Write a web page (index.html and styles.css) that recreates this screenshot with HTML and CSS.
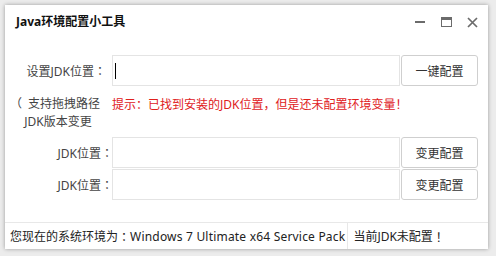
FILE: index.html
```html
<!DOCTYPE html>
<html lang="zh-CN">
<head>
<meta charset="utf-8">
<title>Java环境配置小工具</title>
<link rel="stylesheet" href="styles.css">
</head>
<body>
<div class="window">
  <div class="titlebar">
    <div class="title">Java环境配置小工具</div>
    <div class="controls">
      <svg class="ctl" width="11" height="11" viewBox="0 0 11 11"><rect x="0" y="4" width="10" height="2" fill="#6b6b6b"/></svg>
      <svg class="ctl" width="11" height="11" viewBox="0 0 11 11"><rect x="0.5" y="0.5" width="10" height="9" fill="none" stroke="#6b6b6b"/><rect x="0" y="0" width="11" height="3" fill="#6b6b6b"/></svg>
      <svg class="ctl" width="11" height="11" viewBox="0 0 11 11"><path d="M1 1 L10 10 M10 1 L1 10" stroke="#6b6b6b" stroke-width="1.7"/></svg>
    </div>
  </div>
  <div class="form">
    <div class="label label-first">设置JDK位置<span class="p">：</span></div>
    <div class="field"><span class="caret"></span></div>
    <button class="btn">一键配置</button>

    <div class="label label-note"><span class="p paren">（</span>支持拖拽路径<br>JDK版本变更</div>
    <div class="hint">提示<span class="p">：</span>已找到安装的JDK位置<span class="p">，</span>但是还未配置环境变量<span class="p">！</span></div>
    <div></div>

    <div class="label">JDK位置<span class="p">：</span></div>
    <div class="field"></div>
    <button class="btn">变更配置</button>

    <div class="label">JDK位置<span class="p">：</span></div>
    <div class="field"></div>
    <button class="btn">变更配置</button>
  </div>
  <div class="status">
    <div class="status-env">您现在的系统环境为<span class="p">：</span><span class="latin">Windows 7 Ultimate x64 Service Pack</span></div>
    <div class="status-jdk">当前JDK未配置<span class="p">！</span></div>
  </div>
</div>
</body>
</html>
```
FILE: styles.css
```css
html, body {
  margin: 0;
  padding: 0;
}
body {
  width: 496px;
  height: 256px;
  background: #ececec;
  font-family: "Noto Sans", "Noto Sans CJK SC", sans-serif;
  font-size: 12px;
  color: #333;
  overflow: hidden;
}
.p {
  font-family: "Noto Sans CJK TC", "Noto Sans CJK SC", sans-serif;
}
.paren {
  margin-left: -6px;
  margin-right: 6px;
}
.latin {
  letter-spacing: 0.2px;
}
.window {
  margin: 5px 0 0 5px;
  width: 483px;
  height: 244px;
  background: #fff;
  box-shadow: 0 0 4px rgba(0, 0, 0, 0.35);
  display: flex;
  flex-direction: column;
}
.titlebar {
  height: 32px;
  display: flex;
  align-items: center;
  justify-content: space-between;
  padding: 0 10px 0 11px;
}
.title {
  font-weight: bold;
  font-size: 12px;
  color: #111;
}
.controls {
  display: flex;
  gap: 15px;
  align-items: center;
  padding-top: 2px;
}
.ctl {
  display: block;
}
.form {
  margin-top: 18px;
  display: grid;
  grid-template-columns: 106px 288px 77px;
  grid-template-rows: 31px 51px 32px 32px;
  column-gap: 1px;
}
.label {
  display: flex;
  align-items: center;
  justify-content: flex-end;
  color: #444;
  white-space: nowrap;
  height: 31px;
  margin-right: -2px;
}
.label-first {
  margin-right: 0;
  padding-right: 5px;
}
.label-note {
  display: block;
  text-align: center;
  height: auto;
  line-height: 18px;
  padding-top: 8px;
  margin-right: 0;
}
.field {
  border: 1px solid #e4e4e4;
  height: 29px;
  display: flex;
  align-items: center;
  padding-left: 2px;
}
.caret {
  display: block;
  width: 1px;
  height: 16px;
  background: #000;
}
.btn {
  height: 31px;
  margin: 0;
  padding: 0;
  border: 1px solid #cfcfcf;
  border-radius: 3px;
  background: #fff;
  font-family: inherit;
  font-size: 12px;
  color: #333;
}
.hint {
  color: #e0201c;
  padding-top: 9px;
  white-space: nowrap;
}
.status {
  margin-top: auto;
  height: 26px;
  border-top: 1px solid #e8e8e8;
  display: flex;
  align-items: stretch;
  color: #222;
}
.status-env {
  padding-left: 5px;
  padding-right: 2px;
  display: flex;
  align-items: center;
  white-space: nowrap;
  border-right: 1px solid #e8e8e8;
}
.status-jdk {
  padding-left: 5px;
  display: flex;
  align-items: center;
  white-space: nowrap;
}
```
